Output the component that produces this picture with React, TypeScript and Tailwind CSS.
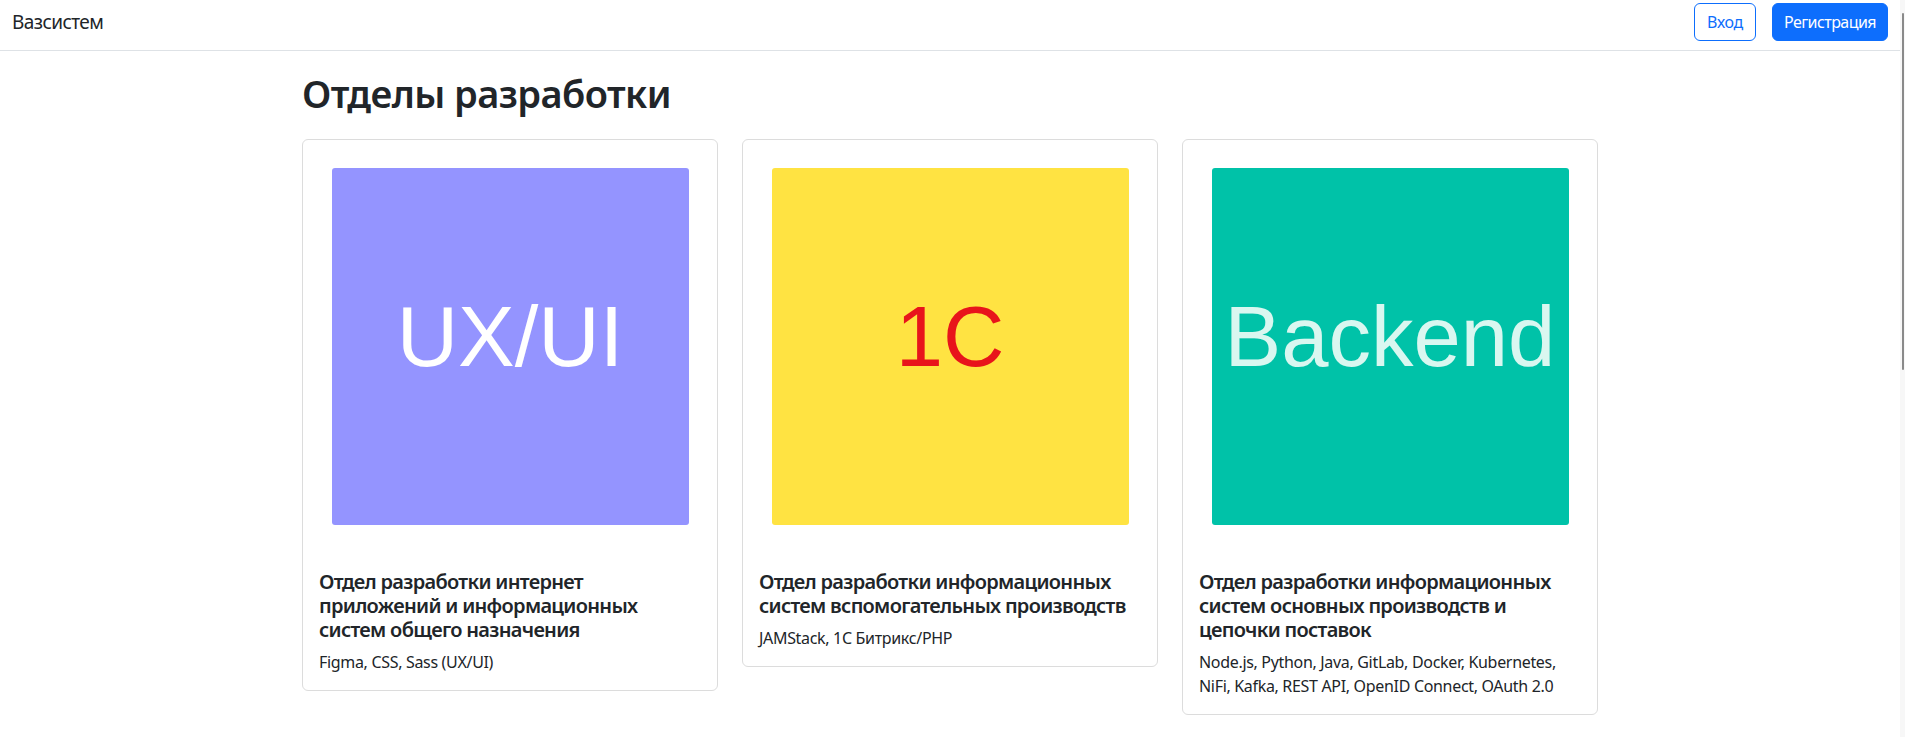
import React from "react";

const departments = [
  {
    label: "UX/UI",
    bg: "bg-[#9494ff]",
    fg: "text-white",
    title: "Отдел разработки интернет приложений и информационных систем общего назначения",
    stack: "Figma, CSS, Sass (UX/UI)",
  },
  {
    label: "1C",
    bg: "bg-[#ffe342]",
    fg: "text-[#e8141b]",
    title: "Отдел разработки информационных систем вспомогательных производств",
    stack: "JAMStack, 1C Битрикс/PHP",
  },
  {
    label: "Backend",
    bg: "bg-[#00c2a8]",
    fg: "text-[#d9f7f0]",
    title: "Отдел разработки информационных систем основных производств и цепочки поставок",
    stack: "Node.js, Python, Java, GitLab, Docker, Kubernetes, NiFi, Kafka, REST API, OpenID Connect, OAuth 2.0",
  },
];

export default function App() {
  return (
    <div className="flex min-h-screen w-full bg-white font-['Noto_Sans',sans-serif] tracking-[-0.02em] text-[#212529]">
      <div className="min-w-0 flex-1">
        {/* NAVBAR */}
        <header className="h-[51px] border-b border-[#dee2e6]">
          <nav className="flex h-[44px] items-center justify-between px-3">
            <a href="#" className="text-[19px] leading-[30px] tracking-[-0.03em] text-[#212529]">
              Вазсистем
            </a>
            <div className="flex items-center gap-4">
              <button className="rounded-md border border-[#0d6efd] px-3 py-1.5 text-base leading-6 text-[#0d6efd]">
                Вход
              </button>
              <button className="rounded-md border border-[#0d6efd] bg-[#0d6efd] px-[11px] py-1.5 text-base leading-6 tracking-[-0.035em] text-white">
                Регистрация
              </button>
            </div>
          </nav>
        </header>

        {/* CONTENT */}
        <main className="mx-auto w-[1320px] px-3 pb-6">
          <h1 className="mt-[18px] mb-[22px] text-[38px] font-semibold leading-[48px] tracking-[-0.015em]">
            Отделы разработки
          </h1>

          <div className="grid grid-cols-3 items-start gap-6">
            {departments.map((d) => (
              <DepartmentCard key={d.label} {...d} />
            ))}
          </div>
        </main>
      </div>

      {/* SCROLLBAR */}
      <div className="w-[5px] shrink-0 bg-[#f7f7f7]">
        <div className="mt-[13px] ml-[2px] h-[357px] w-[2px] rounded-full bg-[#8a8a8a]" />
      </div>
    </div>
  );
}

/* ---------- CARD ---------- */

function DepartmentCard({
  label,
  bg,
  fg,
  title,
  stack,
}: {
  label: string;
  bg: string;
  fg: string;
  title: string;
  stack: string;
}) {
  return (
    <div className="rounded-md border border-[#dcdcdc] bg-white">
      <div
        className={`mx-auto mt-[28px] mb-[29px] flex h-[357px] w-[357px] justify-center rounded-[3px] ${bg}`}
      >
        <span
          className={`pt-[126px] font-['Liberation_Sans',Arial,sans-serif] text-[85px] leading-none tracking-normal ${fg}`}
        >
          {label}
        </span>
      </div>
      <div className="p-4">
        <h5 className="mb-2 text-xl font-semibold leading-6 tracking-[-0.035em]">{title}</h5>
        <p className="text-base leading-6">{stack}</p>
      </div>
    </div>
  );
}
